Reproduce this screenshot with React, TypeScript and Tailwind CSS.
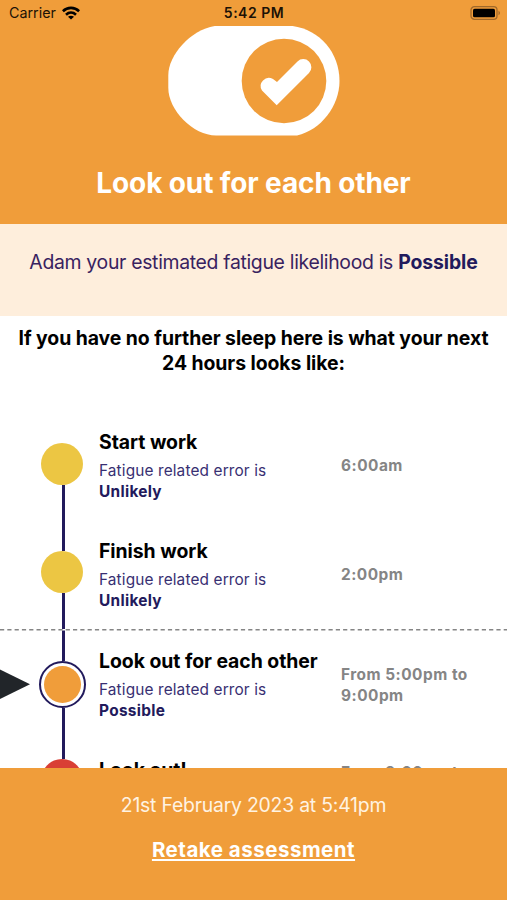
import React from 'react';
import clsx from 'clsx';

interface TimelineEntry {
  title: string;
  likelihood: string;
  time: string;
  dotClass: string;
  leadClass: string;
  textClass: string;
  timeClass: string;
  current?: boolean;
}

const ENTRIES: TimelineEntry[] = [
  {
    title: 'Start work',
    likelihood: 'Unlikely',
    time: '6:00am',
    dotClass: 'bg-[#ecc643]',
    leadClass: 'h-[32px] bg-transparent',
    textClass: 'pt-[19px]',
    timeClass: 'pt-[44px]',
  },
  {
    title: 'Finish work',
    likelihood: 'Unlikely',
    time: '2:00pm',
    dotClass: 'bg-[#ecc643]',
    leadClass: 'h-[31px] bg-[#221a5c]',
    textClass: 'pt-[19px]',
    timeClass: 'pt-[44px]',
  },
  {
    title: 'Look out for each other',
    likelihood: 'Possible',
    time: 'From 5:00pm to 9:00pm',
    dotClass: 'bg-[#f09d3a]',
    leadClass: 'h-[32px] bg-[#221a5c]',
    textClass: 'pt-[20px]',
    timeClass: 'pt-[35px]',
    current: true,
  },
  {
    title: 'Look out!',
    likelihood: 'Probable',
    time: 'From 9:00pm to 6:00am',
    dotClass: 'bg-[#d93f35]',
    leadClass: 'h-[20px] bg-[#221a5c]',
    textClass: 'pt-[19px]',
    timeClass: 'pt-[23px]',
  },
];

function StatusBar() {
  return (
    <div className="grid h-[26px] grid-cols-3 items-center pl-[9px] pr-[6px] text-[#1c1206]">
      <div className="flex items-center gap-[6px]">
        <span className="text-[14.3px] leading-[26px]">Carrier</span>
        <svg width="18" height="14" viewBox="0 0 18 14" fill="none" stroke="#000" strokeWidth="2.6">
          <path d="M.9 5.2C5.5.8 12.5.8 17.1 5.2" />
          <path d="M4 8.7c3-2.8 7-2.8 10 0" />
          <path d="M9 13.6 6 10.8c1.7-1.4 4.3-1.4 6 0z" fill="#000" stroke="none" />
        </svg>
      </div>
      <span className="ml-[-2px] text-center text-[14px] font-semibold leading-[26px] tracking-[0.5px]">5:42 PM</span>
      <svg className="justify-self-end" width="31" height="14" viewBox="0 0 31 14">
        <rect x="1" y=".7" width="26" height="12.6" rx="3.4" fill="none" stroke="#a0692a" strokeWidth="1.3" />
        <rect x="3" y="2.7" width="22" height="8.6" rx="1.6" fill="#000" />
        <path d="M28.5 4.8c2 .8 2 3.6 0 4.4z" fill="#a0692a" />
      </svg>
    </div>
  );
}

function ToggleIcon() {
  return (
    <svg width="172" height="110" viewBox="0 0 172 110">
      <path
        d="M53 -.5H117C148 -.5 171.5 24 171.5 55C171.5 80 153 104 129 109.5H48C25 109.5 .3 84 .3 62V49C.3 28 26 -.5 53 -.5Z"
        fill="#fff"
      />
      <circle cx="116" cy="55" r="42.3" fill="#f09d3a" />
      <path
        d="M108.7 79.3 94 64.5A8.2 8.2 0 0 1 105 53L109 56 129.5 35.5A8 8 0 0 1 141 47Z"
        fill="#fff"
      />
    </svg>
  );
}

function Dot({ entry }: { entry: TimelineEntry }) {
  if (entry.current) {
    return (
      <div className="size-[47px] shrink-0 rounded-full border-[2.5px] border-[#221a5c] bg-white p-[3px]">
        <div className={clsx('size-full rounded-full', entry.dotClass)} />
      </div>
    );
  }
  return <div className={clsx('size-[42px] shrink-0 rounded-full', entry.dotClass)} />;
}

function TimelineRow({ entry }: { entry: TimelineEntry }) {
  return (
    <li className={clsx('relative flex shrink-0', entry.current ? 'h-[110px]' : 'h-[109px]')}>
      {entry.current && (
        <>
          <svg className="absolute left-0 top-0 z-10" width="507" height="2">
            <rect width="507" height="1.5" fill="#fff" />
            <path d="M0 .7H507" stroke="#858585" strokeWidth="1.4" strokeDasharray="4.2 3.1" />
          </svg>
          <svg className="absolute left-0 top-[40px]" width="30" height="31" viewBox="0 0 30 31">
            <path d="M0 .5 30 15.2 0 30Z" fill="#212529" />
          </svg>
        </>
      )}
      <div className="ml-[38px] flex w-[48px] flex-col items-center">
        <div className={clsx('ml-[2px] w-[3px] shrink-0', entry.leadClass)} />
        <Dot entry={entry} />
        <div className="ml-[2px] w-[3px] flex-1 bg-[#221a5c]" />
      </div>
      <div className={clsx('ml-[13px] w-[242px]', entry.textClass)}>
        <h3 className="whitespace-nowrap text-[19.4px] font-bold leading-[24px] tracking-[-0.04px] text-black">
          {entry.title}
        </h3>
        <p className="mt-[6px] text-[15.4px] leading-[21px] tracking-[0.13px] text-[#382f72]">
          Fatigue related error is
          <br />
          <strong className="font-bold tracking-[0.3px] text-[#221a5c]">{entry.likelihood}</strong>
        </p>
      </div>
      <div
        className={clsx(
          'w-[140px] text-[15.4px] font-bold leading-[21px] tracking-[0.5px] text-[#858585]',
          entry.timeClass
        )}
      >
        {entry.time}
      </div>
    </li>
  );
}

export default function App() {
  return (
    <div className="flex h-[900px] w-[507px] flex-col overflow-hidden bg-white font-['Inter',sans-serif]">
      <header className="flex h-[224px] shrink-0 flex-col bg-[#f09d3a]">
        <StatusBar />
        <div className="flex justify-center">
          <ToggleIcon />
        </div>
        <h1 className="mt-[29px] text-center text-[28px] font-bold leading-[36px] tracking-[-0.12px] text-white">
          Look out for each other
        </h1>
      </header>

      <section className="h-[92px] shrink-0 bg-[#feeedc] pt-[26px] text-center">
        <p className="whitespace-nowrap text-[19.4px] leading-[24px] tracking-[-0.31px] text-[#382260]">
          Adam your estimated fatigue likelihood is{' '}
          <strong className="font-bold tracking-[-0.1px] text-[#221a5c]">Possible</strong>
        </p>
      </section>

      <main className="flex min-h-0 flex-1 flex-col overflow-hidden">
        <h2 className="shrink-0 whitespace-nowrap pt-[10px] text-center text-[19.4px] font-bold leading-[25px] tracking-[-0.06px] text-black">
          If you have no further sleep here is what your next
          <br />
          24 hours looks like:
        </h2>
        <ul className="mt-[35px] flex flex-col">
          {ENTRIES.map((entry) => (
            <TimelineRow key={entry.title} entry={entry} />
          ))}
        </ul>
      </main>

      <footer className="flex h-[132px] shrink-0 flex-col items-center bg-[#f09d3a] pt-[25px] text-white">
        <p className="text-[19.4px] leading-[24px] tracking-[-0.22px] text-[#fff3e2]">21st February 2023 at 5:41pm</p>
        <button className="mt-[20px] text-[20.5px] font-bold leading-[26px] tracking-[0.5px] underline decoration-2 underline-offset-2">
          Retake assessment
        </button>
      </footer>
    </div>
  );
}
